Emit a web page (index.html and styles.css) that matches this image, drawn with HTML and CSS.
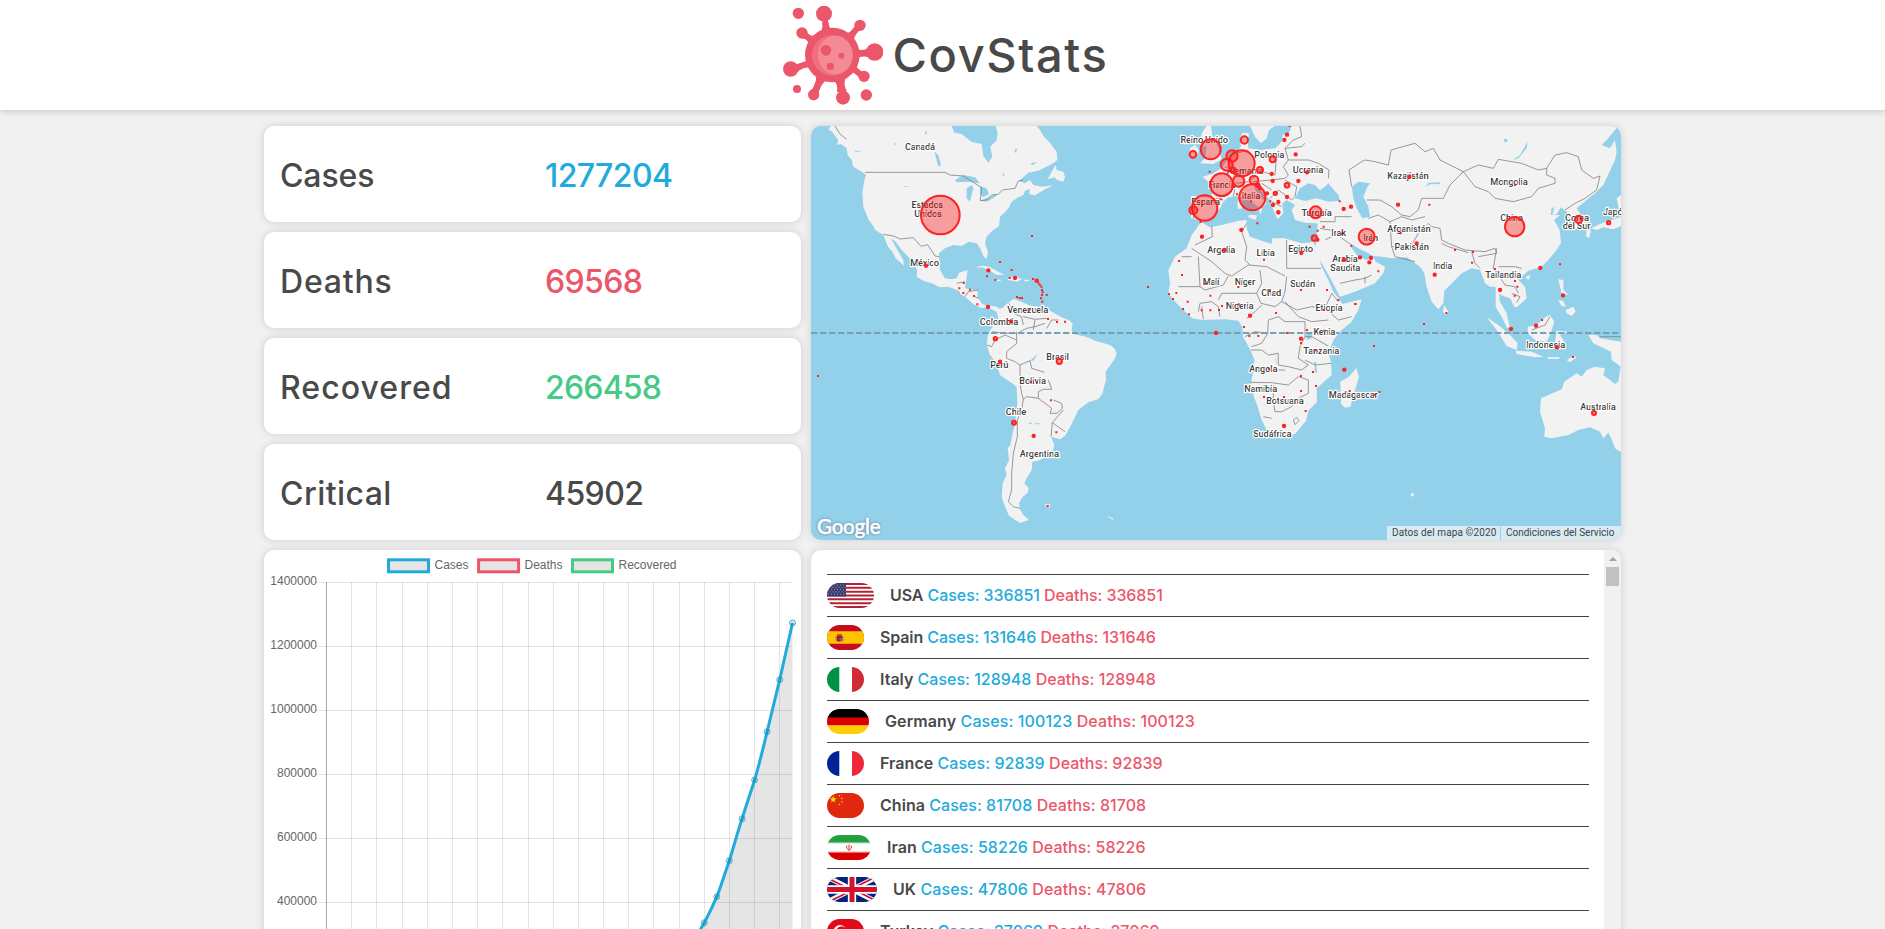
FILE: index.html
```html
<!DOCTYPE html>
<html lang="en">
<head>
<meta charset="utf-8">
<title>CovStats</title>
<link rel="stylesheet" href="styles.css">
</head>
<body>
<header class="header">
  <svg class="logo" viewBox="0 0 300 300">
    <g fill="none" stroke="#eb566a" stroke-width="17" stroke-linecap="round">
      <path d="M123 25L132 78M230 58L198 94M275 138L214 141M242 212L205 182M180 275L168 214M92 266L112 212M24 189L85 169M57 82L91 104"/>
    </g>
    <g fill="#eb566a">
      <path d="M117 50Q122 70 108 82L155 80Q136 66 136 48ZM215 62Q202 82 186 82L212 110Q212 88 230 73ZM252 128Q232 139 212 128L216 162Q232 148 255 153ZM236 197Q214 186 214 164L192 196Q212 196 228 214ZM162 258Q166 234 151 222L190 212Q178 232 192 256ZM85 252Q104 232 98 212L133 222Q115 230 106 262ZM42 176Q65 175 76 160L86 186Q64 180 40 200ZM66 71Q76 91 94 89L78 116Q74 97 52 95Z"/>
      <circle cx="148" cy="147" r="82"/>
      <circle cx="123" cy="23" r="24"/><circle cx="231" cy="58" r="17"/><circle cx="275" cy="138" r="26"/><circle cx="243" cy="211" r="17"/>
      <circle cx="180" cy="275" r="21"/><circle cx="92" cy="266" r="17"/><circle cx="23" cy="189" r="23"/><circle cx="57" cy="81" r="17"/>
      <circle cx="46" cy="22" r="17"/><circle cx="42" cy="249" r="12"/><circle cx="250" cy="267" r="17"/>
    </g>
    <circle cx="148" cy="148" r="61" fill="#f07080"/>
    <ellipse cx="157" cy="147" rx="52" ry="58" fill="#f58a97"/>
    <g fill="#eb566a"><circle cx="129" cy="133" r="16"/><circle cx="175" cy="149" r="9"/><circle cx="142" cy="181" r="11"/></g>
  </svg>
  <h1 class="title">CovStats</h1>
</header>

<main class="grid">
  <section class="stats">
    <div class="card stat"><span class="s-cases">Cases</span><span class="blue n-cases">1277204</span></div>
    <div class="card stat"><span class="s-deaths">Deaths</span><span class="red n-deaths">69568</span></div>
    <div class="card stat"><span class="s-recovered">Recovered</span><span class="green n-recovered">266458</span></div>
    <div class="card stat"><span class="s-critical">Critical</span><span class="n-critical">45902</span></div>
  </section>

  <section class="card map">
    <svg class="world" viewBox="18 18 2430 1242">
      <!-- land -->
      <g class="land">
        <path d="M78 18L70 28L82 35L88 45L100 60L96 75L108 72L125 85L128 105L140 120L145 140L170 155L183 165L178 180L172 220L175 260L190 298L205 318L210 330L235 345L243 365L250 382L262 395L272 415L297 437L295 420L280 395L262 362L258 355L272 365L290 390L310 410L325 430L337 450L335 470L355 482L380 490L405 502L430 500L450 508L465 522L480 530L500 548L510 555L530 565L545 562L560 568L575 575L582 600L570 612L556 630L548 650L545 675L555 705L575 730L585 765L610 782L625 792L635 802L637 850L634 880L630 910L622 945L616 975L608 985L612 1020L600 1045L605 1065L593 1090L590 1130L600 1160L612 1187L630 1200L645 1209L672 1200L655 1185L645 1168L642 1150L652 1132L668 1118L671 1105L658 1090L665 1075L680 1050L682 1025L705 1020L742 1000L748 975L738 950L765 958L780 948L800 912L808 895L820 870L850 847L880 838L893 820L897 800L903 780L902 755L930 715L935 700L928 685L915 675L870 662L858 656L835 648L806 643L800 630L803 612L795 602L770 592L735 572L700 560L672 556L650 545L625 536L608 550L595 562L585 567L575 560L558 557L545 558L532 552L517 532L518 512L480 505L485 470L488 450L462 458L455 475L440 478L420 475L405 450L402 400L420 385L445 375L470 378L492 365L515 370L525 385L535 408L545 417L549 395L540 370L545 350L562 332L582 318L585 290L600 277L612 262L620 245L640 232L655 225L660 212L675 207L672 222L690 226L720 208L745 196L712 200L685 195L675 180L660 190L642 183L670 158L700 152L718 143L745 130L757 120L755 95L732 65L715 48L705 30L695 18L572 18L578 40L575 60L556 80L562 110L550 128L535 108L530 72L500 66L470 42L448 38L440 18Z"/>
        <path d="M728 178L740 155L752 135L755 150L775 155L780 170L775 185L757 180L748 172ZM512 443Q530 432 555 442L580 455L598 464L575 465L555 452L530 442ZM608 476L628 468L650 478L636 485L610 480ZM658 479h14v5h-14ZM573 479h14v4h-14ZM718 1153l18 0l-2 10l-12-4Z"/>
        <!-- Africa -->
        <path d="M1188 306L1215 322L1250 315L1300 302L1325 300L1325 325L1335 350L1370 362L1400 372L1402 355L1438 355L1490 370L1525 366L1535 388L1550 440L1570 480L1585 515L1605 540L1612 552L1670 538L1660 570L1640 605L1610 630L1585 660L1570 700L1577 720L1580 765L1535 805L1536 845L1510 872L1503 902L1470 942L1420 955L1392 945L1385 930L1370 900L1358 860L1336 800L1345 750L1348 720L1336 690L1314 650L1312 622L1300 602L1260 598L1190 600L1162 595L1135 570L1110 545L1090 520L1095 490L1090 450L1110 410L1145 385L1160 345Z"/>
        <path d="M1654 744L1662 770L1650 810L1636 860L1620 863L1608 852L1606 785L1630 772L1645 755Z"/>
        <!-- Europe and Asia -->
        <path d="M1158 228L1220 232L1222 205L1216 190L1192 170L1222 162L1250 145L1268 118L1290 100L1308 80L1305 55L1312 38L1332 40L1328 65L1330 85L1370 90L1412 84L1430 65L1433 45L1452 40L1460 18L2440 18L2405 60L2390 75L2415 85L2430 60L2435 95L2430 120L2395 195L2370 220L2345 240L2315 265L2325 280L2341 310L2330 325L2305 325L2300 300L2285 275L2268 262L2255 282L2242 285L2248 262L2240 264L2237 285L2265 285L2247 300L2264 330L2268 368L2255 390L2230 420L2210 440L2170 452L2150 470L2135 475L2160 500L2165 535L2135 562L2128 560L2115 535L2100 530L2082 522L2085 545L2105 580L2115 625L2105 622L2090 590L2072 560L2072 500L2055 500L2040 490L2025 450L2000 445L1970 460L1930 500L1918 512L1915 550L1900 568L1880 545L1865 500L1858 460L1845 440L1825 425L1805 412L1760 415L1730 410L1705 408L1690 400L1660 385L1645 375L1635 378L1660 410L1685 420L1705 410L1712 425L1740 440L1735 460L1710 490L1650 515L1605 530L1585 492L1565 455L1540 412L1530 390L1535 350L1538 310L1500 308L1470 300L1460 270L1470 255L1445 240L1432 250L1435 280L1418 298L1405 270L1395 240L1370 215L1345 198L1360 225L1385 250L1372 262L1366 285L1360 260L1325 235L1295 228L1270 232L1255 245L1245 265L1222 295L1200 305L1180 300L1158 295Z"/>
        <path d="M1185 130L1200 115L1205 80L1185 75L1190 40L1205 18L1218 18L1222 50L1240 85L1250 118L1225 132ZM1152 110L1155 85L1170 75L1182 90L1175 112ZM1335 18L1350 50L1368 70L1385 55L1392 30L1410 18ZM1332 284L1356 286L1352 300L1330 292ZM1298 242h12v24h-12Z"/>
        <path d="M2448 225L2435 235L2440 260L2448 275ZM2358 325L2390 310L2420 300L2448 290L2448 318L2425 328L2395 322L2375 330ZM2345 330L2358 332L2352 355L2343 348ZM2260 478L2275 480L2275 510L2290 525L2270 520ZM2282 570L2305 560L2312 575L2300 588L2285 580ZM2260 540l15 3l8 18l-14 -4ZM2162 470L2178 465L2170 480ZM1918 555L1930 575L1922 585L1914 575Z"/>
        <path d="M2045 592L2080 615L2115 645L2138 670L2135 690L2105 678L2075 630ZM2132 692L2180 695L2215 710L2190 712L2135 702ZM2168 620L2195 615L2222 590L2235 585L2248 605L2235 645L2225 665L2190 660L2168 640ZM2255 632L2290 635L2265 645L2278 665L2270 680L2250 670ZM2228 712h35v5h-35ZM2285 720l22 -12l8 4l-20 15ZM2350 645L2375 645L2385 655L2448 665L2448 740L2420 720L2418 695L2365 670Z"/>
        <path d="M2448 996L2430 985L2420 958L2410 938L2395 955L2385 935L2355 922L2320 930L2290 945L2240 955L2218 950L2220 925L2205 875L2208 835L2270 808L2278 785L2315 760L2330 770L2345 750L2370 740L2400 745L2395 765L2430 792L2440 785L2448 730ZM1818 1120h8v9h-8ZM909 1188l17 8l-2 3l-15-9Z"/>
      </g>
      <!-- inland water -->
      <g class="water">
        <path d="M1470 235L1485 205L1510 190L1530 195L1545 210L1560 200L1570 190L1600 225L1605 242L1570 245L1535 235L1500 243ZM1640 200L1660 185L1695 190L1685 205L1675 230L1690 260L1695 290L1672 295L1655 265L1645 235ZM450 180L475 165L510 172L525 190L490 185L455 187ZM485 205L500 195L505 205L495 245L485 235ZM525 198L545 205L552 222L535 232L525 222ZM525 242L560 228L570 222L575 228L545 245ZM388 95L400 105L408 135L400 140ZM1504 637L1522 640L1520 655L1505 660ZM2123 120L2145 105L2168 65L2165 85L2140 115ZM1862 200L1870 188L1905 187L1905 192L1875 193ZM358 42l8-12l-2 14ZM675 130l22-3l-14 8ZM628 90l10-5l-6 15ZM150 92l15 1v2h-15ZM1410 700l5 30l-2 2ZM1528 725l5 0l3 35l-6-4ZM675 722l25-22l-15 22ZM690 910h14v3h-14ZM672 908h8v4h-8ZM268 65l5 8l-4 4ZM298 198h12v2h-12ZM2096 55l14 5l-10 10ZM592 155l8 12h-6Z"/>
      </g>
      <!-- borders -->
      <g class="border">
        <path d="M90 18L105 42L125 58M180 157H420L435 165L475 168L510 190L530 203L526 242L545 240L560 225L580 223L592 210L630 205L640 183L655 180M235 343L265 348L285 357L325 353L348 379L368 374L390 408L403 410M455 490L480 485M455 510L465 520M480 530L490 515L520 510M505 528L520 535M612 550L625 580L650 590L655 615M655 590L690 598L725 595M685 630L690 600M725 625L740 600L760 600M645 635L665 625L690 620L720 610M562 635L600 640L635 640M545 675L560 680L570 660L600 645L635 660M635 635L635 670L605 695L605 715L630 725L645 735L675 722L680 745L718 757M645 735L645 790L650 820L655 838L665 830L700 835L700 815L715 808L740 808L730 780M655 838L650 870L637 900L637 950L625 1000L620 1060L620 1110L610 1145L625 1160L645 1165M700 835L740 865L735 880L755 880L772 865L770 850L745 840M742 908L775 870M742 908L780 935M738 950L742 908"/>
        <path d="M1160 385L1220 425L1260 460L1280 468L1330 435L1385 440L1440 468M1220 318L1222 350L1170 375M1325 310L1310 335L1325 380L1320 420L1335 435M1445 360V445H1548M1180 410L1185 500M1120 500L1185 500L1200 510L1255 495L1270 468M1130 410H1160M1365 450L1370 490L1355 520H1250L1240 540M1355 520L1368 550L1410 560L1430 545M1430 545L1440 515L1445 470M1430 545L1475 570L1520 560L1560 565L1580 520L1600 545M1440 545L1480 590L1520 605L1570 600M1560 565L1600 600L1640 590M1180 575L1185 550L1220 545L1240 560L1245 590M1195 598L1190 560M1325 595L1350 575L1370 555M1390 600L1420 590L1440 605L1500 605L1500 650M1390 600L1388 640L1370 670L1340 680M1388 640L1350 635L1320 650M1338 690H1370L1390 705L1420 700V735L1450 740L1490 750L1510 735L1480 715L1485 680L1500 650H1520L1570 678M1500 720L1530 735L1578 730M1336 787L1400 788L1450 795L1480 770L1510 780V820L1480 835L1460 860L1430 875L1410 875L1405 845V795M1375 890L1400 895M1465 900L1475 892L1482 902L1470 914ZM1420 750H1440"/>
        <path d="M1158 245L1170 250L1165 295M1222 232L1255 240M1285 230L1290 205L1275 185L1300 190L1330 185L1350 170L1330 145M1275 145L1260 140M1295 100L1330 90M1330 145L1370 155L1410 165L1415 100M1345 185L1400 180L1440 175L1450 165L1435 140L1450 120L1440 85L1465 60L1490 50L1485 18M1440 85L1490 80L1500 70M1450 120L1510 120L1540 130L1572 150L1570 175M1395 235L1420 210L1440 225L1460 240L1470 230L1475 200L1440 180M1370 190L1400 210M1400 245L1430 260M1545 305H1590L1590 290M1545 325L1575 330L1640 375M1590 290L1640 290M1560 360L1580 350M1605 490L1650 480L1680 475L1700 465M1640 200L1632 150L1670 125L1680 120L1710 125L1750 135L1758 90L1830 70L1860 95L1885 85L1905 120L1975 155L1935 195L1915 235L1850 235L1840 270L1815 290L1790 285L1760 260L1725 240L1685 240M1690 295L1720 285L1755 305L1790 290L1820 300L1860 290M1755 305L1760 380L1770 410L1830 425M1760 380L1820 375L1840 340L1870 310L1880 320L1905 325L1910 360L1930 370L1980 390L2040 395L2070 385L2075 400L2020 410M1910 370L1930 380L1990 398M2000 395L2010 430L2025 445M1975 155L2010 200L2050 215L2070 235L2125 245L2180 230L2200 205L2250 190L2250 175L2225 165L2225 145L2200 150L2150 130L2080 118L2065 145L2020 135L1975 155M2225 145L2250 105L2285 98L2320 110L2330 150L2365 175L2385 168L2375 210L2340 235L2310 250L2280 270M2075 385L2065 445L2090 480L2100 495L2130 500L2140 520M2080 440L2130 440L2150 445M2120 520L2145 530L2135 548M1680 490V470M2180 630L2220 615L2235 590M2385 650L2448 650"/>
      </g>
      <path class="equator" d="M18 639H2448"/>
      <!-- country names -->
      <g class="label">
        <text x="345" y="91" textLength="90">Canadá</text><text x="367" y="265" textLength="95">Estados</text><text x="369" y="292" textLength="83">Unidos</text>
        <text x="359" y="439" textLength="87">México</text><text x="668" y="580" textLength="123">Venezuela</text><text x="582" y="616" textLength="115">Colombia</text>
        <text x="583" y="745" textLength="54">Perú</text><text x="758" y="721" textLength="68">Brasil</text><text x="683" y="793" textLength="80">Bolivia</text>
        <text x="633" y="886" textLength="62">Chile</text><text x="703" y="1012" textLength="118">Argentina</text>
        <text x="1198" y="70" textLength="143">Reino Unido</text><text x="1393" y="115" textLength="90">Polonia</text><text x="1509" y="160" textLength="91">Ucrania</text>
        <text x="1320" y="163" textLength="110">Alemania</text><text x="1251" y="205" textLength="81">Francia</text><text x="1338" y="238" textLength="56">Italia</text>
        <text x="1202" y="256" textLength="86">España</text><text x="1535" y="289" textLength="91">Turquía</text><text x="1601" y="349" textLength="44">Irak</text>
        <text x="1249" y="400" textLength="84">Argelia</text><text x="1382" y="409" textLength="55">Libia</text><text x="1487" y="397" textLength="74">Egipto</text>
        <text x="1620" y="427" textLength="77">Arabia</text><text x="1621" y="454" textLength="90">Saudita</text><text x="1218" y="496" textLength="50">Malí</text>
        <text x="1320" y="496" textLength="62">Níger</text><text x="1493" y="502" textLength="75">Sudán</text><text x="1399" y="529" textLength="60">Chad</text>
        <text x="1304" y="568" textLength="83">Nigeria</text><text x="1572" y="574" textLength="81">Etiopía</text><text x="1558" y="646" textLength="65">Kenia</text>
        <text x="1549" y="703" textLength="108">Tanzania</text><text x="1375" y="757" textLength="85">Angola</text><text x="1367" y="817" textLength="99">Namibia</text>
        <text x="1440" y="853" textLength="113">Botsuana</text><text x="1645" y="835" textLength="147">Madagascar</text><text x="1402" y="952" textLength="115">Sudáfrica</text>
        <text x="1809" y="178" textLength="124">Kazajistán</text><text x="2112" y="196" textLength="112">Mongolia</text><text x="2120" y="304" textLength="68">China</text>
        <text x="2316" y="304" textLength="72">Corea</text><text x="2315" y="328" textLength="83">del Sur</text><text x="2431" y="286" textLength="74">Japón</text>
        <text x="1812" y="337" textLength="130">Afganistán</text><text x="1820" y="391" textLength="103">Pakistán</text><text x="1697" y="364" textLength="45">Irán</text>
        <text x="1913" y="448" textLength="58">India</text><text x="2095" y="475" textLength="108">Tailandia</text><text x="2222" y="685" textLength="117">Indonesia</text><text x="2379" y="871" textLength="107">Australia</text>
      </g>
      <!-- outbreaks -->
      <g class="outbreak">
        <circle cx="406" cy="285" r="58"/><circle cx="1217" cy="88" r="30"/><circle cx="1310" cy="130" r="39"/><circle cx="1250" cy="194" r="34"/>
        <circle cx="1199" cy="264" r="38"/><circle cx="1342" cy="232" r="39"/><circle cx="1265" cy="134" r="18"/><circle cx="1281" cy="108" r="17"/>
        <circle cx="1301" cy="183" r="17"/><circle cx="1347" cy="180" r="13"/><circle cx="1532" cy="277" r="18"/><circle cx="1685" cy="350" r="24"/>
        <circle cx="2129" cy="320" r="29"/><circle cx="1165" cy="271" r="12"/><circle cx="1164" cy="103" r="10"/><circle cx="1318" cy="60" r="11"/>
        <circle cx="1403" cy="118" r="9"/><circle cx="1365" cy="150" r="9"/><circle cx="1446" cy="196" r="7"/><circle cx="1528" cy="354" r="8"/>
        <circle cx="2321" cy="298" r="11"/><circle cx="763" cy="724" r="8"/><circle cx="627" cy="908" r="6"/><circle cx="571" cy="656" r="5"/>
        <circle cx="2367" cy="879" r="6"/><circle cx="1283" cy="150" r="8"/><circle cx="1411" cy="220" r="5"/><circle cx="1420" cy="277" r="4"/><circle cx="2411" cy="308" r="5"/><circle cx="1358" cy="196" r="6"/>
      </g>
      <path class="dots big" d="M363 437h.1M630 474h.1M549 561h.1M618 604h.1M585 725h.1M686 948h.1M550 451h.1M695 482h.1M1437 918h.1M1233 639h.1M1889 464h.1M1835 370h.1M1698 414h.1M1693 427h.1M2206 444h.1M2085 510h.1M2274 526h.1M2193 617h.1M2118 627h.1M2256 682h.1M1813 171h.1M1779 254h.1M1616 267h.1M1638 260h.1M1665 412h.1M1537 359h.1M1617 419h.1M1489 399h.1M1259 390h.1M1191 350h.1M1309 330h.1M1506 157h.1M1472 103h.1M1438 60h.1M1446 44h.1M1480 183h.1M1403 183h.1M1446 231h.1M1420 246h.1M1404 255h.1M1386 220h.1M1400 162h.1M1335 587h.1M1618 749h.1M1488 656h.1M1365 205h.1"/>
      <path class="dots" d="M681 348h.1M585 426h.1M620 450h.1M546 469h.1M571 480h.1M614 474h.1M476 489h.1M463 505h.1M475 519h.1M495 509h.1M507 528h.1M517 553h.1M684 477h.1M700 488h.1M704 494h.1M709 500h.1M711 510h.1M713 517h.1M711 525h.1M725 525h.1M708 535h.1M712 545h.1M636 531h.1M644 534h.1M651 534h.1M671 571h.1M729 597h.1M756 606h.1M780 605h.1M39 768h.1M678 786h.1M738 841h.1M754 937h.1M728 1158h.1M1214 155h.1M1247 238h.1M1187 306h.1M1357 310h.1M1396 244h.1M1454 18h.1M1338 244h.1M1296 223h.1M1604 244h.1M1514 320h.1M1556 320h.1M1538 332h.1M1608 341h.1M1639 377h.1M1377 419h.1M1122 423h.1M1131 465h.1M1029 501h.1M1092 522h.1M1114 519h.1M1104 537h.1M1148 545h.1M1134 567h.1M1152 583h.1M1190 571h.1M1216 571h.1M1242 570h.1M1251 558h.1M1301 553h.1M1216 527h.1M1200 491h.1M1300 501h.1M1395 511h.1M1488 510h.1M1566 510h.1M1600 540h.1M1650 552h.1M1413 579h.1M1317 621h.1M1333 648h.1M1360 648h.1M1446 639h.1M1506 630h.1M1558 632h.1M1557 570h.1M1488 669h.1M1532 691h.1M1392 747h.1M1488 768h.1M1524 756h.1M1533 798h.1M1488 813h.1M1377 831h.1M1437 831h.1M1502 873h.1M1634 813h.1M1873 254h.1M1787 340h.1M1720 454h.1M1950 390h.1M2004 396h.1M2001 428h.1M2070 447h.1M2130 483h.1M2137 500h.1M2129 527h.1M2265 433h.1M2130 195h.1M1924 579h.1M1857 612h.1M1652 552h.1M1707 678h.1M1707 824h.1M1723 816h.1M2211 600h.1M2304 711h.1"/>
    </svg>
    <span class="google">Google</span>
    <div class="terms"><span class="t-data">Datos del mapa ©2020</span><span class="t-serv">Condiciones del Servicio</span></div>
  </section>

  <section class="card chart">
    <svg class="plot" viewBox="264 550 537 379">
      <path class="gridline" d="M316.5 582.5H793M316.5 646.5H793M316.5 710.5H793M316.5 774.5H793M316.5 838.5H793M316.5 902.5H793M351.5 582V929M376.5 582V929M402.5 582V929M427.5 582V929M452.5 582V929M477.5 582V929M502.5 582V929M528.5 582V929M553.5 582V929M578.5 582V929M603.5 582V929M628.5 582V929M653.5 582V929M679.5 582V929M704.5 582V929M729.5 582V929M754.5 582V929M779.5 582V929"/>
      <path class="axis" d="M326.5 582V929"/>
      <path class="area" d="M690 945L704.3 922.7L716.8 896.7L729.3 860.7L742.1 818.7L754.6 780L767.1 731.7L779.7 679.7L792.5 623V945Z"/>
      <path class="line" d="M690 945Q697.5 935 704.3 922.7C709 914 712.5 907 716.8 896.7C721.5 885 725 873 729.3 860.7C734 846 737.5 832 742.1 818.7C746 806 750.5 793 754.6 780C759 765 763 749 767.1 731.7C771.5 714 775.5 697 779.7 679.7L792.5 623"/>
      <g class="point"><circle cx="792.5" cy="623" r="3"/><circle cx="779.7" cy="679.7" r="3"/><circle cx="767.1" cy="731.7" r="3"/><circle cx="754.6" cy="780" r="3"/><circle cx="742.1" cy="818.7" r="3"/><circle cx="729.3" cy="860.7" r="3"/><circle cx="716.8" cy="896.7" r="3"/><circle cx="704.3" cy="922.7" r="3"/></g>
      <g class="key"><rect class="k-blue" x="388.5" y="559.8" width="40" height="12"/><rect class="k-red" x="478.6" y="559.8" width="40" height="12"/><rect class="k-green" x="572.5" y="559.8" width="40" height="12"/></g>
      <g class="chart-text"><text x="434.5" y="569">Cases</text><text x="524.5" y="569">Deaths</text><text x="618.5" y="569">Recovered</text></g>
      <g class="chart-text tick"><text x="317" y="585">1400000</text><text x="317" y="649">1200000</text><text x="317" y="713">1000000</text><text x="317" y="777">800000</text><text x="317" y="841">600000</text><text x="317" y="905">400000</text></g>
    </svg>
  </section>

  <section class="card countries">
    <ul class="list">
      <li class="row"><svg class="flag" width="47" height="25" viewBox="0 0 47 25"><path fill="#fff" d="M0 0h47v25H0z"/><path stroke="#b22234" stroke-width="1.92" d="M0 1h47M0 4.8h47M0 8.7h47M0 12.5h47M0 16.3h47M0 20.2h47M0 24h47"/><path fill="#3c3b6e" d="M0 0h19v13.5H0z"/><path stroke="#a9a9c6" stroke-width=".9" stroke-dasharray="1 2" d="M1 2h18M2.500 4.300h16M1 6.600h18M2.500 8.900h16M1 11.200h18"/></svg><p class="r1"><b>USA</b> <span class="blue">Cases: 336851</span> <span class="red">Deaths: 336851</span></p></li>
      <li class="row"><svg class="flag" width="37" height="25" viewBox="0 0 37 25"><path fill="#c60b1e" d="M0 0h37v25H0z"/><path fill="#ffc400" d="M0 6.200h37v12.600H0z"/><path fill="#ad1519" d="M9.500 11h6v4.500q-3 2.500-6 0z"/><path fill="#b8a080" d="M8 11h1v6H8zM16 11h1v6h-1z"/><path fill="#a8601c" d="M10 9h5v2h-5z"/><path fill="#6b5fa0" d="M12.500 13h2.500v3h-2.500z"/></svg><p class="r2"><b>Spain</b> <span class="blue">Cases: 131646</span> <span class="red">Deaths: 131646</span></p></li>
      <li class="row"><svg class="flag" width="37" height="25" viewBox="0 0 37 25"><path fill="#fff" d="M0 0h37v25H0z"/><path fill="#009246" d="M0 0h12.300v25H0z"/><path fill="#ce2b37" d="M25 0h12v25H25z"/></svg><p class="r3"><b>Italy</b> <span class="blue">Cases: 128948</span> <span class="red">Deaths: 128948</span></p></li>
      <li class="row"><svg class="flag" width="42" height="25" viewBox="0 0 42 25"><path d="M0 0h42v9H0z"/><path fill="#d00" d="M0 8.500h42v8H0z"/><path fill="#ffce00" d="M0 16.500h42V25H0z"/></svg><p class="r4"><b>Germany</b> <span class="blue">Cases: 100123</span> <span class="red">Deaths: 100123</span></p></li>
      <li class="row"><svg class="flag" width="37" height="25" viewBox="0 0 37 25"><path fill="#fff" d="M0 0h37v25H0z"/><path fill="#002395" d="M0 0h12.300v25H0z"/><path fill="#ed2939" d="M25 0h12v25H25z"/></svg><p class="r5"><b>France</b> <span class="blue">Cases: 92839</span> <span class="red">Deaths: 92839</span></p></li>
      <li class="row"><svg class="flag" width="37" height="25" viewBox="0 0 37 25"><path fill="#de2910" d="M0 0h37v25H0z"/><path fill="#ffde00" d="M6.200 2.500l.9 2.700h2.800L7.600 6.900l.9 2.700-2.300-1.700-2.300 1.700.9-2.700-2.300-1.700h2.800zM11.500 2l2 0-1 2zM14 4.500l2 .5-1.500 1.500zM14 8.500l2-.5-1 2zM11.500 10.500l2 .5-1.500 1.500z"/></svg><p class="r6"><b>China</b> <span class="blue">Cases: 81708</span> <span class="red">Deaths: 81708</span></p></li>
      <li class="row"><svg class="flag" width="44" height="25" viewBox="0 0 44 25"><path fill="#fff" d="M0 0h44v25H0z"/><path fill="#239f40" d="M0 0h44v7.500H0z"/><path fill="#da0000" d="M0 17.500h44V25H0z"/><path fill="none" stroke="#239f40" stroke-opacity=".35" d="M0 8h44"/><path fill="none" stroke="#da0000" stroke-opacity=".35" d="M0 17h44"/><path fill="none" stroke="#da3a3a" d="M22 9.500v6M19.800 10.500q-1.500 3 2.200 4.800q3.700-1.800 2.200-4.800"/></svg><p class="r7"><b>Iran</b> <span class="blue">Cases: 58226</span> <span class="red">Deaths: 58226</span></p></li>
      <li class="row"><svg class="flag" width="50" height="25" viewBox="0 0 50 25"><path fill="#00247d" d="M0 0h50v25H0z"/><path stroke="#fff" stroke-width="5" d="M0 0l50 25M50 0L0 25"/><path stroke="#cf142b" stroke-width="1.700" d="M0 .8l25 12.500M50 24.200L25 11.700M50-.8L25 11.700M0 25.800l25-12.500"/><path stroke="#fff" stroke-width="8.300" d="M25 0v25M0 12.500h50"/><path stroke="#cf142b" stroke-width="5" d="M25 0v25M0 12.500h50"/></svg><p class="r8"><b>UK</b> <span class="blue">Cases: 47806</span> <span class="red">Deaths: 47806</span></p></li>
      <li class="row"><svg class="flag" width="37" height="25" viewBox="0 0 37 25"><path fill="#e30a17" d="M0 0h37v25H0z"/><circle cx="13" cy="12.500" r="6.500" fill="#fff"/><circle cx="14.600" cy="12.500" r="5.200" fill="#e30a17"/><path fill="#fff" d="M17 12.500l5.500-2-3.400 4.700v-5.600l3.400 4.600z"/></svg><p class="r9"><b>Turkey</b> <span class="blue">Cases: 27069</span> <span class="red">Deaths: 27069</span></p></li>
    </ul>
    <div class="scrollbar"><i class="arrow"></i><i class="thumb"></i></div>
  </section>
</main>
</body>
</html>
```
FILE: styles.css
```css
* { box-sizing: border-box; }
body {
  margin: 0;
  height: 929px;
  overflow: hidden;
  background: #f1f1f1;
  color: #494949;
  font-family: Inter, "Open Sans", sans-serif;
  font-weight: 500;
}
.header {
  height: 110px;
  display: flex;
  justify-content: center;
  padding: 6px 0 4px 4px;
  gap: 10px;
  background: #fff;
  box-shadow: 0 0 8px rgba(0, 0, 0, .25);
}
.logo { width: 100px; height: 100px; }
.title { margin: 0; width: 214px; font-size: 47px; line-height: 98px; font-weight: 500; letter-spacing: 1.6px; white-space: nowrap; }
.grid {
  display: grid;
  grid-template: 414px 400px / 537px 810px;
  gap: 10px;
  width: 1357px;
  margin: 16px auto 0;
}
.card { background: #fff; border-radius: 10px; box-shadow: 0 0 8px rgba(0, 0, 0, .15); overflow: hidden; }
.stats { display: grid; grid-template-rows: repeat(4, 96px); gap: 10px; }
.stat { display: grid; grid-template-columns: 265px 1fr; align-items: center; padding: 2px 16px 0; font-size: 32px; }
.s-cases { letter-spacing: -.1px; }
.s-deaths { letter-spacing: .8px; }
.s-recovered { letter-spacing: 1.05px; }
.s-critical { letter-spacing: .45px; }
.n-cases, .n-deaths, .n-critical { letter-spacing: -.6px; }
.n-recovered { letter-spacing: -.8px; }
.blue { color: #22aadb; }
.red { color: #eb566a; }
.green { color: #46ca85; }

.map { position: relative; background: #93d1ea; }
.world { display: block; width: 810px; height: 414px; }
.land { fill: #f2f2f2; }
.water { fill: #93d1ea; }
.border { fill: none; stroke: #808080; stroke-width: 2.4; }
.equator { stroke: #76a1b3; stroke-width: 6; stroke-dasharray: 19 8; }
.label { font: 500 28px Roboto, sans-serif; fill: #3c3c3c; stroke: #fff; stroke-width: 7; stroke-linejoin: round; paint-order: stroke; text-anchor: middle; }
.outbreak { fill: #f00; fill-opacity: .35; stroke: #f22; stroke-width: 6; }
.dots { fill: none; stroke: #f22; stroke-width: 6; stroke-linecap: square; }
.dots.big { stroke-width: 13; stroke-linecap: round; }
.google { position: absolute; left: 6px; bottom: 3px; font: 500 20.5px/22px Lato, sans-serif; letter-spacing: -.2px; color: #fff; -webkit-text-stroke: .5px #fff; text-shadow: 0 0 3px #557; }
.terms { position: absolute; right: 0; bottom: 0; display: flex; gap: 1px; font: 400 10px/14px Roboto, sans-serif; color: #444; white-space: nowrap; }
.terms span { background: rgba(245, 245, 245, .7); padding-left: 5px; }
.t-data { width: 113px; letter-spacing: .1px; }
.t-serv { width: 120px; letter-spacing: -.02px; }

.plot { display: block; width: 537px; height: 379px; }
.gridline { stroke: rgba(0, 0, 0, .1); }
.axis { stroke: rgba(0, 0, 0, .35); }
.area { fill: rgba(0, 0, 0, .1); }
.line { fill: none; stroke: #22aadb; stroke-width: 3; }
.point { fill: rgba(0, 0, 0, .1); stroke: #22aadb; stroke-opacity: .8; }
.key { fill: #e5e5e5; stroke-width: 3; }
.k-blue { stroke: #22aadb; }
.k-red { stroke: #eb566a; }
.k-green { stroke: #46ca85; }
.chart-text { font: 400 12px "Liberation Sans", Arial, sans-serif; fill: #666; }
.tick { text-anchor: end; }

.countries { display: flex; }
.list { flex: 1; list-style: none; margin: 0; padding: 24px 15px 0 16px; }
.row { display: flex; align-items: center; gap: 16px; height: 42px; border-top: 1px solid #444; font-size: 16px; }
.flag { flex: none; border-radius: 12.5px; }
.row p { margin: 0; padding-bottom: 2px; white-space: nowrap; }
.row b { font-weight: 600; }
.r1 { letter-spacing: -.08px; }
.r2 { letter-spacing: -.12px; }
.r4 { letter-spacing: .1px; }
.r5, .r6, .r7 { letter-spacing: .04px; }
.r8 { letter-spacing: .08px; }
.scrollbar { width: 17px; background: #f1f1f1; padding: 7px 2px; }
.arrow { display: block; width: 0; margin: 0 auto 6px; border: 4px solid transparent; border-top: 0; border-bottom-color: #a3a3a3; }
.thumb { display: block; height: 19px; background: #c1c1c1; }
```
